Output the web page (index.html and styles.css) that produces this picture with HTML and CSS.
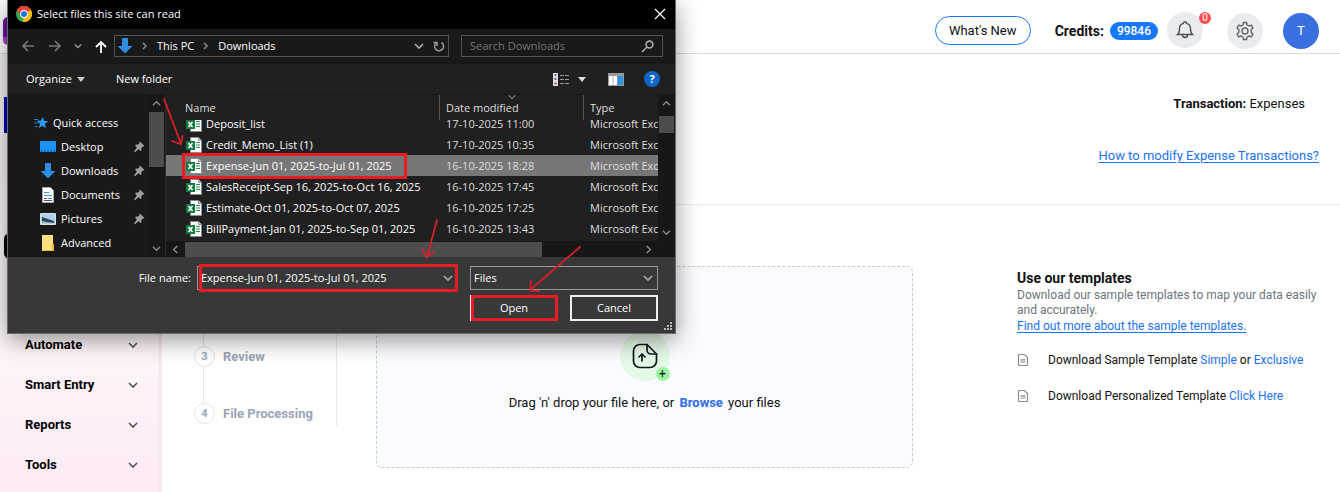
FILE: index.html
```html
<!DOCTYPE html>
<html lang="en">
<head>
<meta charset="utf-8">
<title>Import Expenses</title>
<link rel="stylesheet" href="styles.css">
</head>
<body>
<svg class="defs" aria-hidden="true">
  <symbol id="chev" viewBox="0 0 10 10"><path d="M1 3l4 4 4-4" fill="none" stroke="currentColor" stroke-width="1.6"/></symbol>
  <symbol id="excel" viewBox="0 0 16 16">
    <path d="M4.500.5h8l3 3v12h-11z" fill="#fff" stroke="#8a8a8a"/>
    <path d="M12.500.5v3h3" fill="#ddd" stroke="#8a8a8a"/>
    <path d="M10 5.500h4M10 8h4M10 10.500h4" stroke="#1d8a4e"/>
    <path d="M0 4h9v9H0z" fill="#107c41"/>
    <path d="M2.500 6l4 5M6.500 6l-4 5" stroke="#fff" stroke-width="1.500"/>
  </symbol>
  <symbol id="pin" viewBox="0 0 12 12"><path d="M7 1l4 4-1.500.4L8 7v2.500L5.500 8 1.500 11 4 6.500 2.500 4H5l1.600-1.500z" fill="#9aa0a3" stroke="#9aa0a3" stroke-width=".8"/></symbol>
  <symbol id="down" viewBox="0 0 16 16"><path d="M5 0h6v8h4.500L8 15.500.5 8H5z" fill="#2f8de0"/></symbol>
  <symbol id="doc" viewBox="0 0 12 14"><path d="M2.500 1.500h5l3 3v7a1 1 0 0 1-1 1h-7a1 1 0 0 1-1-1v-9a1 1 0 0 1 1-1z" fill="none" stroke="#868b90" stroke-width="1.200"/><path d="M3.500 6.800h5M3.500 9h5" stroke="#868b90" stroke-width="1.200"/></symbol>
</svg>

<header class="topbar">
  <div class="logo"></div>
  <button class="whats-new">What's New</button>
  <div class="credits">Credits: <span class="pill">99846</span></div>
  <button class="round bell" aria-label="Notifications">
    <svg width="20" height="20" viewBox="0 0 20 20" fill="none" stroke="#4d5358" stroke-width="1.400"><path d="M2.500 14.500h15c-1.800-1.500-2-3-2-6a5.500 5.500 0 0 0-4-5.200 1.500 1.500 0 0 0-3 0 5.500 5.500 0 0 0-4 5.200c0 3-.2 4.500-2 6z"/><path d="M7.500 15a2.500 2.500 0 0 0 5 0"/></svg>
    <span class="count">0</span>
  </button>
  <button class="round gear" aria-label="Settings">
    <svg width="20" height="20" viewBox="0 0 20 20" fill="none" stroke="#5f666b" stroke-width="1.400" stroke-linejoin="round"><path d="M8.500 1.500h3l.6 2.500 1.800 1 2.500-.8 1.500 2.600L16.100 9v2l1.800 2.200-1.500 2.600-2.500-.8-1.800 1-.6 2.500h-3L7.900 16l-1.800-1-2.500.8-1.500-2.600L3.900 11V9L2.100 6.800l1.500-2.600 2.500.8 1.800-1z"/><circle cx="10" cy="10" r="3"/></svg>
  </button>
  <button class="round avatar">T</button>
</header>

<div class="page">
  <nav class="sidebar">
    <div class="brand-block"></div>
    <div class="active-block"></div>
    <ul class="menu">
      <li><a href="#">Automate</a><svg width="10" height="10"><use href="#chev"/></svg></li>
      <li><a href="#">Smart Entry</a><svg width="10" height="10"><use href="#chev"/></svg></li>
      <li><a href="#">Reports</a><svg width="10" height="10"><use href="#chev"/></svg></li>
      <li><a href="#">Tools</a><svg width="10" height="10"><use href="#chev"/></svg></li>
    </ul>
  </nav>

  <main class="main">
    <section class="summary">
      <p class="transaction"><b>Transaction:</b> Expenses</p>
      <a class="help" href="#">How to modify Expense Transactions?</a>
    </section>
    <section class="content">
      <ol class="steps">
        <li><span class="num">3</span>Review</li>
        <li><span class="num">4</span>File Processing</li>
      </ol>
      <div class="drop">
        <div class="upload">
          <svg width="26" height="26" viewBox="0 0 26 26" fill="none" stroke="#101820" stroke-width="1.700" stroke-linecap="round" stroke-linejoin="round"><path d="M15 1.500H8A6.500 6.500 0 0 0 1.500 8v10A6.500 6.500 0 0 0 8 24.500h10a6.500 6.500 0 0 0 6.500-6.500v-7z"/><path d="M15 1.500V7a4 4 0 0 0 4 4h5.500"/><path d="M10 18v-6.500M7 14l3-3 3 3"/></svg>
          <span class="plus">+</span>
        </div>
        <p>Drag 'n' drop your file here, or <a href="#">Browse</a> your files</p>
      </div>
      <aside class="templates">
        <h2>Use our templates</h2>
        <p>Download our sample templates to map your data easily and accurately.</p>
        <a class="more" href="#">Find out more about the sample templates.</a>
        <ul>
          <li><svg width="12" height="14"><use href="#doc"/></svg><span>Download Sample Template <a href="#">Simple</a> or <a href="#">Exclusive</a></span></li>
          <li><svg width="12" height="14"><use href="#doc"/></svg><span>Download Personalized Template <a href="#">Click Here</a></span></li>
        </ul>
      </aside>
    </section>
  </main>
</div>

<div class="dialog" role="dialog" aria-label="Select files this site can read">
  <div class="titlebar">
    <svg width="16" height="16" viewBox="0 0 16 16"><circle cx="8" cy="8" r="8" fill="#34a853"/><path d="M8 8L1.070 4A8 8 0 0 1 14.930 4z" fill="#ea4335"/><path d="M8 8l6.930-4A8 8 0 0 1 8 16l-1-.1z" fill="#fbbc05"/><path d="M1.070 4L5 10.500 8 8V4h6.930A8 8 0 0 0 1.070 4z" fill="#ea4335"/><circle cx="8" cy="8" r="3.900" fill="#fff"/><circle cx="8" cy="8" r="3" fill="#1a73e8"/></svg>
    <span>Select files this site can read</span>
    <button class="close" aria-label="Close"><svg width="12" height="12" viewBox="0 0 12 12"><path d="M1 1l10 10M11 1L1 11" stroke="#fff" stroke-width="1.200"/></svg></button>
  </div>
  <div class="address">
    <div class="arrows">
      <svg width="14" height="12" viewBox="0 0 14 12" fill="none" stroke="#777" stroke-width="1.700"><path d="M13 6H2M7 1L2 6l5 5"/></svg>
      <svg width="14" height="12" viewBox="0 0 14 12" fill="none" stroke="#777" stroke-width="1.700"><path d="M1 6h11M7 1l5 5-5 5"/></svg>
      <svg width="8" height="8" class="dim"><use href="#chev"/></svg>
      <svg width="12" height="13" viewBox="0 0 12 13" fill="none" stroke="#fff" stroke-width="1.800"><path d="M6 13V2M1 7l5-5 5 5"/></svg>
    </div>
    <div class="path">
      <svg width="16" height="16"><use href="#down"/></svg>
      <svg class="sep" width="6" height="8" viewBox="0 0 6 8"><path d="M1 1l3 3-3 3" fill="none" stroke="#888" stroke-width="1.500"/></svg>
      <span>This PC</span>
      <svg class="sep" width="6" height="8" viewBox="0 0 6 8"><path d="M1 1l3 3-3 3" fill="none" stroke="#888" stroke-width="1.500"/></svg>
      <span>Downloads</span>
      <svg class="dim push" width="10" height="10"><use href="#chev"/></svg>
      <svg width="12" height="12" viewBox="0 0 12 12" fill="none" stroke="#999" stroke-width="1.500"><path d="M8.500 2.500A4.500 4.500 0 1 1 3 3M.5 2.500H4V6"/></svg>
    </div>
    <label class="search"><input type="text" placeholder="Search Downloads" aria-label="Search Downloads"><svg width="13" height="13" viewBox="0 0 13 13" fill="none" stroke="#aaa" stroke-width="1.600"><circle cx="8.500" cy="4.500" r="3.400"/><path d="M6 7L1 12"/></svg></label>
  </div>
  <div class="tools">
    <button>Organize <svg width="8" height="5" viewBox="0 0 8 5"><path d="M0 0h8L4 5z" fill="#ccc"/></svg></button>
    <button>New folder</button>
    <span class="views">
      <svg width="16" height="13" viewBox="0 0 16 13"><path d="M0 0h5v13H0z" fill="#ddd"/><path d="M1.500 2h2M1.500 6h2" stroke="#357" stroke-width="1.500"/><path d="M1.500 10.500h2" stroke="#b22" stroke-width="1.500"/><path d="M7 2.500h4M12 2.500h4M7 6.500h4M12 6.500h4M7 10.500h4M12 10.500h4" stroke="#999"/></svg>
      <svg width="8" height="5" viewBox="0 0 8 5"><path d="M0 0h8L4 5z" fill="#ddd"/></svg>
    </span>
    <svg width="16" height="13" viewBox="0 0 16 13"><path d="M0 0h16v13H0z" fill="#999"/><path d="M1 3h8v9H1z" fill="#fff"/><path d="M5 3v9" stroke="#bbb"/><path d="M9.500 3h5.500v9H9.500z" fill="#3391e0"/></svg>
    <button class="help-badge" aria-label="Help">?</button>
  </div>
  <div class="browser">
    <div class="tree">
      <ul>
        <li class="root"><svg width="14" height="14" viewBox="0 0 16 16"><path d="M10 1l1.500 4.500L16 6l-3.500 3 1 5-4-2.800L5.500 14l1.500-5-4-3.500 5-.3z" fill="#2f9bf0"/><path d="M0 4h5M0 8h5M1 12h3" stroke="#2f7fd0" stroke-width="1.200"/></svg>Quick access</li>
        <li><svg width="16" height="14" viewBox="0 0 16 14"><path d="M0 1h16v11H0z" fill="#1b95f5"/><path d="M1 11h14" stroke="#0b5394" stroke-dasharray="2 1"/></svg>Desktop<svg class="pin" width="12" height="12"><use href="#pin"/></svg></li>
        <li><svg width="16" height="16"><use href="#down"/></svg>Downloads<svg class="pin" width="12" height="12"><use href="#pin"/></svg></li>
        <li><svg width="16" height="16" viewBox="0 0 16 16"><path d="M2.500.5h8l3 3v12h-11z" fill="#fff" stroke="#aaa"/><path d="M4 5.500h5M4 8.500h8M8 11.500h4" stroke="#4a90c8" stroke-width="1.200"/><path d="M4 11.500h3M4 13.500h8" stroke="#555"/></svg>Documents<svg class="pin" width="12" height="12"><use href="#pin"/></svg></li>
        <li><svg width="16" height="14" viewBox="0 0 16 14"><path d="M.5 1.500h15v11H.5z" fill="#a8d3f0" stroke="#ddd"/><path d="M2 5l6 2 6 2v2H2z" fill="#345"/><path d="M2 9l5 1 7 1H2z" fill="#9bb"/></svg>Pictures<svg class="pin" width="12" height="12"><use href="#pin"/></svg></li>
        <li><svg width="16" height="16" viewBox="0 0 16 16"><path d="M2 0h11v16H2z" fill="#ffdf80"/><path d="M12 9h2v7H3v-1h9z" fill="#f2b92e"/></svg>Advanced</li>
      </ul>
      <div class="vbar"><svg class="up" width="9" height="9"><use href="#chev"/></svg><i class="thumb tall"></i><svg class="end" width="9" height="9"><use href="#chev"/></svg></div>
    </div>
    <div class="files">
      <div class="listing">
        <div class="cols"><span>Name</span><span>Date modified<svg class="sort" width="8" height="8"><use href="#chev"/></svg></span><span>Type</span></div>
        <div class="rows">
          <table>
            <colgroup><col class="c-name"><col class="c-date"><col></colgroup>
            <tbody>
            <tr><td><svg width="16" height="16"><use href="#excel"/></svg>Deposit_list</td><td>17-10-2025 11:00</td><td>Microsoft Excel</td></tr>
            <tr><td><svg width="16" height="16"><use href="#excel"/></svg>Credit_Memo_List (1)</td><td>17-10-2025 10:35</td><td>Microsoft Excel</td></tr>
            <tr class="selected"><td><svg width="16" height="16"><use href="#excel"/></svg>Expense-Jun 01, 2025-to-Jul 01, 2025</td><td>16-10-2025 18:28</td><td>Microsoft Excel</td></tr>
            <tr><td><svg width="16" height="16"><use href="#excel"/></svg>SalesReceipt-Sep 16, 2025-to-Oct 16, 2025</td><td>16-10-2025 17:45</td><td>Microsoft Excel</td></tr>
            <tr><td><svg width="16" height="16"><use href="#excel"/></svg>Estimate-Oct 01, 2025-to-Oct 07, 2025</td><td>16-10-2025 17:25</td><td>Microsoft Excel</td></tr>
            <tr><td><svg width="16" height="16"><use href="#excel"/></svg>BillPayment-Jan 01, 2025-to-Sep 01, 2025</td><td>16-10-2025 13:43</td><td>Microsoft Excel</td></tr>
            </tbody>
          </table>
        </div>
      </div>
      <div class="vbar"><svg class="up" width="9" height="9"><use href="#chev"/></svg><i class="thumb"></i><svg class="end" width="9" height="9"><use href="#chev"/></svg></div>
      <div class="hbar"><svg class="left" width="9" height="9"><use href="#chev"/></svg><i></i><svg class="right" width="9" height="9"><use href="#chev"/></svg></div>
    </div>
  </div>
  <div class="foot">
    <label class="fname" for="fname">File name:</label>
    <div class="field"><input id="fname" type="text" value="Expense-Jun 01, 2025-to-Jul 01, 2025"><svg width="10" height="10"><use href="#chev"/></svg></div>
    <div class="field"><select aria-label="File type"><option>Files</option></select><svg width="10" height="10"><use href="#chev"/></svg></div>
    <div class="actions"><button>Open</button><button>Cancel</button></div>
    <svg class="grip" width="8" height="8" viewBox="0 0 8 8" fill="#bbb"><path d="M6 0h2v2H6zM3 3h2v2H3zM6 3h2v2H6zM0 6h2v2H0zM3 6h2v2H3zM6 6h2v2H6z"/></svg>
  </div>
  <svg class="marks" width="668" height="333" viewBox="7 0 668 333" fill="none" stroke="#ed1c24">
    <g stroke-width="3"><path d="M183.500 154.500h222v23h-222z"/><path d="M200.500 265.500h256v25h-256z"/><path d="M472.500 296.500h84v23h-84z"/></g>
    <g stroke="#d3202f" stroke-width="1.800" stroke-linecap="round"><path d="M164 99l17 45M172 141l9 3 1.500-8"/><path d="M437 220l-10 37M422 249l4.500 8 8-5"/><path d="M580 247l-50 43M531 281l-1 9.500 9 .5"/></g>
  </svg>
</div>
</body>
</html>
```
FILE: styles.css
```css
* { box-sizing: border-box; }
body { margin: 0; min-height: 100vh; display: flex; flex-direction: column; position: relative; background: #fff; color: #111; font: 13px/16px Roboto, "Liberation Sans", sans-serif; }
button { font: inherit; color: inherit; background: none; border: 0; padding: 0; }
ul, ol, p, h2 { margin: 0; padding: 0; list-style: none; }
svg { display: block; flex: none; }
.defs { position: absolute; width: 0; height: 0; }
a { color: #1b72f2; text-decoration: none; }

.topbar { display: flex; align-items: center; height: 54px; padding: 8px 21px 0 3px; border-bottom: 1px solid #dcdcdc; }
.logo { width: 28px; height: 28px; margin-right: auto; border-radius: 5px; background: linear-gradient(#6414a5 70%, #9b45bf 70%); }
.whats-new { width: 96px; height: 29px; border: 1px solid #1677ff; border-radius: 15px; margin-right: 24px; }
.credits { display: flex; align-items: center; gap: 6px; font-size: 14px; font-weight: 700; }
.pill { background: #1677ff; color: #fff; font-size: 12px; font-weight: 500; line-height: 18px; padding: 0 7px; border-radius: 9px; }
.round { width: 36px; height: 36px; border-radius: 50%; background: #e9ebee; display: flex; align-items: center; justify-content: center; position: relative; }
.bell { margin: 0 24px 2px 9px; }
.count { position: absolute; top: 0; right: -8px; width: 12px; height: 12px; border-radius: 6px; background: #ff4d4f; color: #fff; font-size: 10px; line-height: 12px; }
.gear { margin: 0 20px 0 0; }
.avatar { background: #3a6fe0; color: #fff; }

.page { flex: 1; display: flex; }
.sidebar { width: 162px; border-right: 4px solid #f6e9f3; background: linear-gradient(#f3eff2, #fff8fa 60%, #fdeaf5); padding: 43px 0 0 4px; }
.brand-block { height: 36px; width: 140px; background: #0004b0; }
.active-block { height: 26px; width: 140px; margin-top: 100px; background: #000; border-radius: 6px; }
.menu { margin: 66px 20px 0 21px; display: flex; flex-direction: column; }
.menu li { height: 40px; display: flex; align-items: center; justify-content: space-between; color: #555; }
.menu a { color: #000; font-weight: 700; }
.main { flex: 1; min-width: 0; }
.summary { height: 151px; border-bottom: 1px solid #e8e8e8; padding: 42px 21px 0 0; display: flex; flex-direction: column; align-items: flex-end; gap: 36px; }
.transaction { padding-right: 14px; }
.help, .more { text-decoration: underline; text-underline-offset: 2px; }
.content { display: grid; grid-template-columns: 175px minmax(0, 1fr) 312px; padding: 61px 11px 24px 0; align-items: start; }
.steps { height: 160px; border-right: 1px solid #e8eaee; padding: 0 0 2px 32px; display: flex; flex-direction: column; justify-content: flex-end; gap: 36px; background: linear-gradient(#e3e5e8, #e3e5e8) 41px 0 / 1px 140px no-repeat; }
.steps li { display: flex; align-items: center; gap: 8px; font-weight: 700; color: #9aa5b5; }
.num { width: 21px; height: 21px; border: 1px solid #e0e3e7; border-radius: 50%; background: #fff; text-align: center; line-height: 19px; font-size: 11px; }
.drop { height: 202px; margin: 0 104px 0 39px; border: 1px dashed #c6ccd3; border-radius: 6px; background: #fafbfe; display: flex; flex-direction: column; align-items: center; padding-top: 64px; gap: 14px; }
.upload { position: relative; width: 50px; height: 50px; border-radius: 50%; background: #e4f9e6; display: flex; align-items: center; justify-content: center; }
.plus { position: absolute; right: 0; bottom: 0; width: 14px; height: 14px; border-radius: 50%; background: #9df5a3; text-align: center; font-size: 12px; line-height: 14px; }
.drop a { font-weight: 700; color: #2f6bea; margin: 0 2px; }
.templates { padding-top: 4px; }
.templates h2 { font-size: 14px; line-height: 16px; margin-bottom: 2px; }
.templates p { font-size: 12px; line-height: 15px; color: #6c757d; }
.more { font-size: 12px; display: block; }
.templates ul { margin-top: 18px; display: grid; gap: 20px; font-size: 12px; }
.templates li { display: flex; align-items: center; gap: 19px; white-space: nowrap; }

.dialog { position: absolute; left: 7px; top: 0; width: 669px; background: #383838; border: 1px solid #6a6a6a; border-top: 0; color: #fff; font: 11px/16px "Open Sans", "Noto Sans", sans-serif; box-shadow: 0 6px 22px rgba(0, 0, 0, .42); }
.titlebar { height: 29px; background: #000; display: flex; align-items: center; gap: 5px; padding: 0 9px 2px 8px; }
.close { margin-left: auto; }
.address { height: 35px; background: #191919; display: flex; align-items: center; padding: 0 12px 1px 13px; }
.arrows { display: flex; align-items: center; justify-content: space-between; width: 86px; margin-right: 7px; }
.dim, .field svg { color: #aaa; }
.path { flex: 1; height: 22px; border: 1px solid #535353; display: flex; align-items: center; gap: 9px; padding: 0 3px 0 2px; }
.push { margin-left: auto; }
.search { width: 202px; height: 22px; margin-left: 12px; border: 1px solid #535353; display: flex; align-items: center; padding: 0 8px; }
input, select { appearance: none; flex: 1; min-width: 0; border: 0; padding: 0; background: none; color: #fff; font: inherit; outline: 0; }
input::placeholder { color: #757575; opacity: 1; }
.tools { height: 30px; background: #202020; display: flex; align-items: center; padding: 0 15px 0 18px; }
.tools button { display: flex; align-items: center; gap: 5px; margin-right: 31px; }
.views { margin: 0 22px 0 auto; display: flex; align-items: center; gap: 9px; }
.tools .help-badge { width: 16px; height: 16px; margin: 0 0 0 20px; border-radius: 50%; background: #0a66c8; justify-content: center; font-weight: 700; }
.browser { display: flex; height: 163px; border-top: 1px solid #191919; }
.tree { width: 158px; border-right: 1px solid #2b2b2b; background: #191919; display: flex; }
.tree ul { flex: 1; padding-top: 16px; }
.tree li { height: 24px; display: flex; align-items: center; gap: 5px; padding-left: 32px; }
.tree .root { padding-left: 26px; }
.tree .pin { margin: 0 3px 0 auto; }
.vbar { width: 17px; background: #171717; color: #888; display: flex; flex-direction: column; align-items: center; padding: 4px 0; }
.thumb { width: 15px; height: 17px; margin-top: 8px; background: #4d4d4d; }
.tall { height: 55px; margin-top: 4px; }
.up { transform: rotate(180deg); }
.end { margin-top: auto; }
.files { flex: 1; min-width: 0; background: #202020; display: grid; grid-template: 146px 16px / minmax(0, 1fr) 17px; }
.cols { height: 25px; display: flex; color: #ddd; }
.cols span { width: 144px; padding: 5px 0 0 6px; border-right: 1px solid #555; position: relative; }
.cols span:first-child { width: 274px; padding-left: 19px; }
.cols span:last-child { width: auto; border: 0; }
.sort { position: absolute; left: 68px; top: -2px; color: #777; }
.rows { height: 120px; overflow: hidden; display: flex; flex-direction: column; justify-content: flex-end; padding-bottom: 1px; }
table { table-layout: fixed; width: 100%; border-collapse: collapse; flex: none; }
.c-name { width: 274px; }
.c-date { width: 144px; }
td { height: 21px; padding: 0 0 0 6px; white-space: nowrap; overflow: hidden; color: #ddd; }
td:first-child { padding-left: 20px; color: #fff; }
td svg { float: left; margin-right: 4px; }
.selected { background: #777; }
.hbar { grid-column: 1 / 3; background: #171717; color: #888; display: flex; align-items: center; padding: 0 22px 0 5px; }
.hbar i { width: 357px; height: 15px; margin-left: 5px; background: #4d4d4d; }
.left { transform: rotate(90deg); }
.right { transform: rotate(-90deg); margin-left: auto; }
.foot { position: relative; display: grid; grid-template-columns: 183px 261px 188px; gap: 5px 0; padding: 9px 0 12px; justify-content: start; column-gap: 6px; }
.foot .field:nth-of-type(2), .actions { margin-left: 6px; margin-right: -6px; }
.fname { text-align: right; line-height: 24px; }
.field { height: 24px; border: 1px solid #999; display: flex; align-items: center; padding: 0 4px 0 3px; }
.actions { grid-column: 3; display: flex; gap: 12px; }
.actions button { flex: 1; height: 26px; border: 2px solid #eee; }
.grip { position: absolute; right: 3px; bottom: 3px; }
.marks { position: absolute; left: -1px; top: 0; pointer-events: none; }
```
